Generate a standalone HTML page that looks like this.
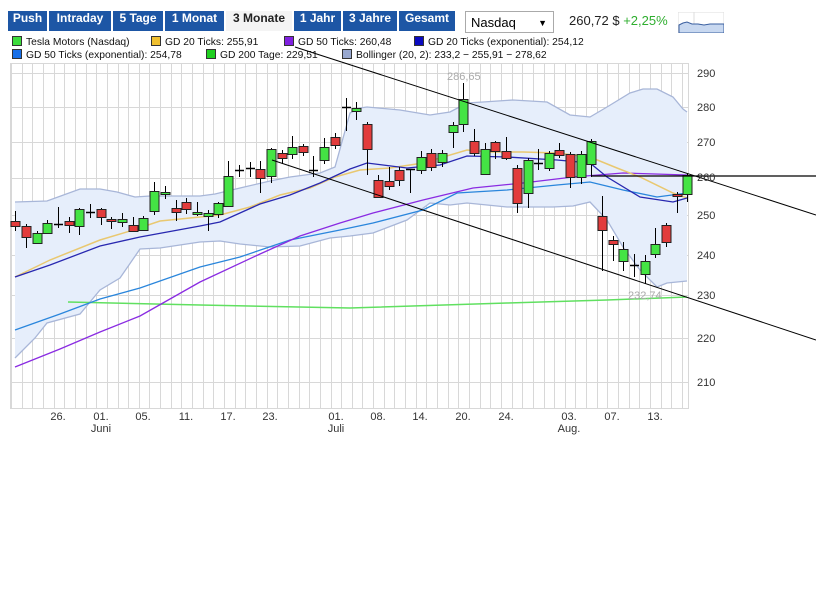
<!DOCTYPE html>
<html><head><meta charset="utf-8"><style>
body{margin:0;background:#fff;width:816px;height:612px;overflow:hidden;font-family:"Liberation Sans",Arial,sans-serif;position:relative}
.b{position:absolute;top:11px;height:20px;line-height:22px;background:#1d56a5;color:#fff;font:bold 12px "Liberation Sans",sans-serif;text-align:center}
.b.a{background:#f4f4f4;color:#222}
.lg{position:absolute;font-size:10.3px;color:#111;white-space:nowrap;line-height:13px}
.sq{display:inline-block;width:8px;height:8px;border:1px solid #333;margin-right:4px;vertical-align:-1px}
</style></head><body>
<div class="b" style="left:8px;width:39px">Push</div>
<div class="b" style="left:49px;width:62px">Intraday</div>
<div class="b" style="left:113px;width:50px">5 Tage</div>
<div class="b" style="left:165px;width:59px">1 Monat</div>
<div class="b a" style="left:226px;width:66px">3 Monate</div>
<div class="b" style="left:294px;width:47px">1 Jahr</div>
<div class="b" style="left:343px;width:54px">3 Jahre</div>
<div class="b" style="left:399px;width:56px">Gesamt</div>
<div style="position:absolute;left:465px;top:11px;border:1px solid #aaa;font-size:13px;line-height:22px;padding-left:5px;box-sizing:border-box;width:89px;height:22px">Nasdaq<span style="position:absolute;right:6px;top:0;font-size:9px">▼</span></div>
<div style="position:absolute;left:569px;top:13px;font-size:13px;color:#222">260,72 $ <span style="color:#2fae2f">+2,25%</span></div>
<svg style="position:absolute;left:678px;top:12px" width="46" height="21"><rect x="0" y="0" width="46" height="21" fill="#fff" stroke="#ddd"/><line x1="16" y1="0" x2="16" y2="21" stroke="#ddd"/><path d="M1 13 L5 11 L9 10 L14 12 L20 12 L26 13 L32 12 L40 12 L46 12 L46 21 L1 21Z" fill="#c8d8f0" stroke="#3a5fa0"/></svg>
<div class="lg" style="left:12px;top:36px"><span class="sq" style="background:#3cdc3c"></span>Tesla Motors (Nasdaq)</div>
<div class="lg" style="left:151px;top:36px"><span class="sq" style="background:#f0c030"></span>GD 20 Ticks: 255,91</div>
<div class="lg" style="left:284px;top:36px"><span class="sq" style="background:#8020e0"></span>GD 50 Ticks: 260,48</div>
<div class="lg" style="left:414px;top:36px"><span class="sq" style="background:#0a0ac0"></span>GD 20 Ticks (exponential): 254,12</div>
<div class="lg" style="left:12px;top:49px"><span class="sq" style="background:#1870e8"></span>GD 50 Ticks (exponential): 254,78</div>
<div class="lg" style="left:206px;top:49px"><span class="sq" style="background:#20d020"></span>GD 200 Tage: 229,51</div>
<div class="lg" style="left:342px;top:49px"><span class="sq" style="background:#98a8d0"></span>Bollinger (20, 2): 233,2 − 255,91 − 278,62</div>
<svg id="c" style="position:absolute;left:0;top:0" width="816" height="440" font-family="Liberation Sans, sans-serif">
<g id="grid" stroke="#d8d8d8" stroke-width="1"></g>
<path id="boll" fill="#e6eefb" stroke="none"/>
<polyline id="bu" fill="none" stroke="#a8b6d8" stroke-width="1.3"/>
<polyline id="bl" fill="none" stroke="#a8b6d8" stroke-width="1.3"/>
<polyline id="g200" fill="none" stroke="#60e060" stroke-width="1.5"/>
<polyline id="g50e" fill="none" stroke="#2a86dc" stroke-width="1.3"/>
<polyline id="g50" fill="none" stroke="#8a2be2" stroke-width="1.3"/>
<polyline id="g20" fill="none" stroke="#e9c870" stroke-width="1.5"/>
<polyline id="g20e" fill="none" stroke="#2828b0" stroke-width="1.3"/>
<g id="cd"></g>
<line x1="295" y1="47" x2="816" y2="215" stroke="#000" stroke-width="1"/>
<line x1="272" y1="160" x2="816" y2="340" stroke="#000" stroke-width="1"/>
<line x1="591" y1="176" x2="816" y2="176" stroke="#000" stroke-width="1.2"/>
<text x="447" y="80" font-size="11" fill="#aaa">286,65</text>
<text x="628" y="299" font-size="11" fill="#aaa">232,74</text>
<g font-size="11" fill="#333">
<text x="697" y="77">290</text><text x="697" y="111">280</text><text x="697" y="146">270</text><text x="697" y="181">260</text><text x="697" y="219">250</text><text x="697" y="259">240</text><text x="697" y="299">230</text><text x="697" y="342">220</text><text x="697" y="386">210</text>
</g>
<g font-size="11" fill="#333" text-anchor="middle">
<text x="58" y="420">26.</text><text x="101" y="420">01.</text><text x="143" y="420">05.</text><text x="186" y="420">11.</text><text x="228" y="420">17.</text><text x="270" y="420">23.</text><text x="336" y="420">01.</text><text x="378" y="420">08.</text><text x="420" y="420">14.</text><text x="463" y="420">20.</text><text x="506" y="420">24.</text><text x="569" y="420">03.</text><text x="612" y="420">07.</text><text x="655" y="420">13.</text>
<text x="101" y="432">Juni</text><text x="336" y="432">Juli</text><text x="569" y="432">Aug.</text>
</g>
</svg>
<script>
var ns="http://www.w3.org/2000/svg";
function el(p,t,a){var e=document.createElementNS(ns,t);for(var k in a)e.setAttribute(k,a[k]);p.appendChild(e);return e;}
var g=document.getElementById('grid');
el(g,'rect',{x:10.5,y:63.5,width:678,height:345,fill:'none'});
for(var i=0;i<64;i++){var x=Math.round(11+i*10.65)+.5;el(g,'line',{x1:x,y1:63,x2:x,y2:408});}
[73,107,142,178,215,255,295,338,382].forEach(function(y){el(g,'line',{x1:10,y1:y+.5,x2:688,y2:y+.5});});
function pts(a){return a.map(function(p){return p.join(',')}).join(' ');}
var up=[[15,202],[47,201],[80,189],[100,189],[117,192],[135,197],[150,196],[200,196],[215,194],[240,188],[270,181],[290,177],[320,173],[335,167],[350,113],[360,108],[367,107],[400,110],[430,115],[450,112],[467,103],[483,102],[513,100],[547,102],[570,115],[590,117],[607,107],[630,93],[643,89],[657,89],[673,97],[683,109],[687,112]];
var lo=[[15,358],[35,338],[47,323],[80,314],[100,290],[120,278],[140,249],[160,248],[200,242],[220,241],[240,244],[270,247],[300,246],[330,238],[350,236],[373,233],[407,220],[430,203],[450,205],[467,203],[507,207],[553,207],[573,206],[590,202],[607,220],[623,247],[640,270],[657,287],[667,283],[687,281]];
document.getElementById('bu').setAttribute('points',pts(up));
document.getElementById('bl').setAttribute('points',pts(lo));
document.getElementById('boll').setAttribute('d','M'+pts(up)+' L'+pts(lo.slice().reverse())+'Z');
document.getElementById('g20').setAttribute('points',pts([[15,277],[50,260],[100,240],[130,231],[160,221],[200,217],[220,215],[250,207],[280,195],[310,188],[335,177],[360,170],[390,168],[423,163],[467,150],[490,152],[523,152],[557,153],[590,157],[617,168],[640,177],[673,193],[687,198]]));
document.getElementById('g20e').setAttribute('points',pts([[15,277],[50,265],[100,246],[140,237],[200,226],[220,222],[260,204],[290,195],[320,183],[350,169],[367,163],[407,168],[440,165],[467,156],[507,157],[557,160],[590,163],[607,177],[640,197],[673,202],[687,198]]));
document.getElementById('g50').setAttribute('points',pts([[15,367],[60,349],[100,332],[140,316],[200,282],[260,254],[300,236],[340,223],[373,213],[423,200],[473,188],[523,183],[573,177],[623,173],[687,175]]));
document.getElementById('g50e').setAttribute('points',pts([[15,330],[60,314],[100,299],[140,288],[200,267],[240,257],[290,240],[340,230],[373,223],[423,210],[457,193],[507,190],[557,185],[590,182],[623,190],[657,197],[687,193]]));
document.getElementById('g200').setAttribute('points',pts([[68,302],[200,305],[350,308],[507,303],[607,300],[687,297]]));
var C=[[15,221,226,211,231,'r'],[26,226,237,224,248,'r'],[37,233,243,231,244,'g'],[47,223,233,220,234,'g'],[58,224,224,207,228,'c'],[69,221,225,217,233,'r'],[79,209,226,208,235,'g'],[90,212,212,204,218,'c'],[101,209,217,208,225,'r'],[111,219,221,217,229,'r'],[122,219,222,213,227,'g'],[133,225,231,217,232,'r'],[143,218,230,216,231,'g'],[154,191,211,182,215,'g'],[165,192,194,186,199,'g'],[176,208,212,200,221,'r'],[186,202,209,198,214,'r'],[197,212,214,202,216,'g'],[208,213,216,210,231,'g'],[218,203,214,202,218,'g'],[228,176,206,161,207,'g'],[239,170,170,165,177,'c'],[250,168,168,162,177,'c'],[260,169,178,161,193,'r'],[271,149,176,148,183,'g'],[282,153,158,150,164,'r'],[292,147,154,136,159,'g'],[303,146,152,144,156,'r'],[313,170,170,156,177,'c'],[324,147,160,138,164,'g'],[335,137,145,133,149,'r'],[346,107,107,98,131,'c'],[356,108,111,102,120,'g'],[367,124,149,122,175,'r'],[378,180,197,175,197,'r'],[389,181,186,167,190,'r'],[399,170,180,167,186,'r'],[410,169,169,169,193,'c'],[421,157,170,151,174,'g'],[431,153,167,149,171,'r'],[442,153,162,150,167,'g'],[453,125,132,122,148,'g'],[463,99,124,83,132,'g'],[474,141,153,129,156,'r'],[485,149,174,143,174,'g'],[495,142,151,141,159,'r'],[506,151,158,137,160,'r'],[517,168,203,165,213,'r'],[528,160,193,158,208,'g'],[538,163,163,149,170,'c'],[549,153,168,151,171,'g'],[559,150,155,143,158,'r'],[570,154,177,152,188,'r'],[581,154,177,151,184,'g'],[591,141,164,139,177,'g'],[602,216,230,196,271,'r'],[613,240,244,236,261,'r'],[623,249,261,242,271,'g'],[634,265,265,254,277,'c'],[645,261,274,255,284,'g'],[655,244,254,228,258,'g'],[666,225,242,223,247,'r'],[677,194,196,192,213,'r'],[687,175,194,173,202,'g']];
var cd=document.getElementById('cd');
C.forEach(function(c){var x=c[0]+.5;
el(cd,'line',{x1:x,y1:c[3],x2:x,y2:c[4],stroke:'#000','stroke-width':1});
if(c[5]=='c'){el(cd,'line',{x1:x-4.5,y1:c[1]+.5,x2:x+4.5,y2:c[1]+.5,stroke:'#000','stroke-width':1.5});}
else{var h=Math.max(c[2]-c[1],2);el(cd,'rect',{x:x-4.5,y:c[1]+.5,width:9,height:h,fill:c[5]=='g'?'#44e444':'#e23c3c',stroke:'#222','stroke-width':1});}
});
</script>
</body></html>
